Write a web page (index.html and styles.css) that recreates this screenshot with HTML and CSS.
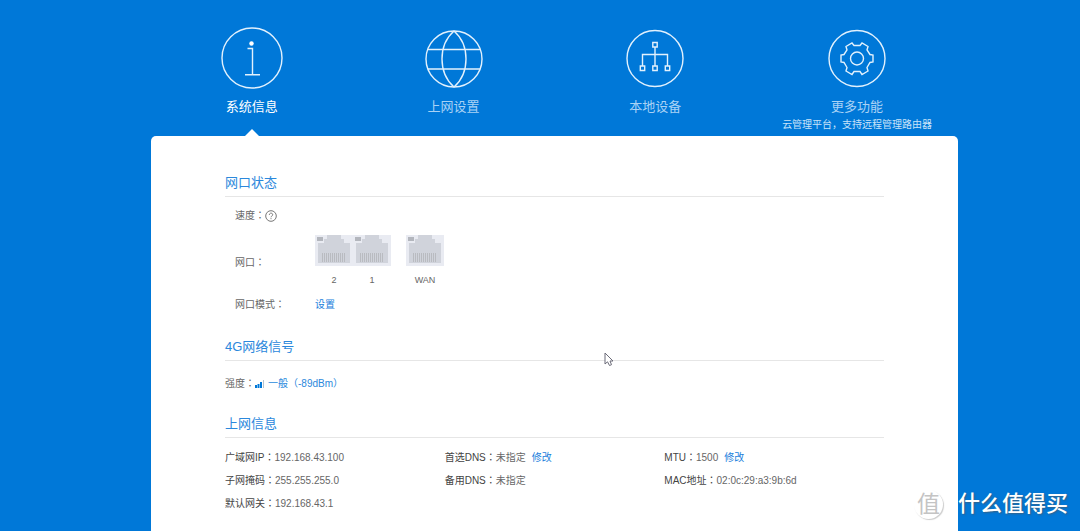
FILE: index.html
```html
<!DOCTYPE html>
<html lang="zh-CN">
<head>
<meta charset="utf-8">
<title>系统信息</title>
<meta name="viewport" content="width=device-width, initial-scale=1">
<link rel="stylesheet" href="styles.css">
</head>
<body>
<svg class="defs" width="0" height="0" aria-hidden="true">
  <symbol id="port" viewBox="0 0 38 31">
    <rect width="38" height="31" fill="#e9ebf2"/>
    <path d="M3 8H9V4H12V0H26V4H29V8H35V28H3Z" fill="#d0d3db"/>
    <rect x="2" y="2" width="6" height="4" fill="#b3b6bd"/>
    <path d="M7.500 18V27M9.500 18V27M11.500 18V27M13.500 18V27M15.500 18V27M17.500 18V27M19.500 18V27M21.500 18V27M23.500 18V27M25.500 18V27M27.500 18V27M29.500 18V27" stroke="#b9bbc0" stroke-width="1"/>
  </symbol>
</svg>
<div class="page">
  <nav class="tabs">
    <a class="tab active" href="#system">
      <svg class="tab-icon" viewBox="0 0 62 62"><circle cx="31" cy="31" r="30"/><path d="M26.500 21.500H31.500V47.500M24 47.700H39"/><circle class="dot" cx="30.500" cy="16.500" r="2.200"/></svg>
      <span class="tab-label">系统信息</span>
    </a>
    <a class="tab" href="#network">
      <svg class="tab-icon" viewBox="0 0 62 62"><circle cx="31" cy="32" r="28"/><path d="M31 4C15 18 15 46 31 60M31 4C47 18 47 46 31 60M5 22.500H57M5 42H57"/></svg>
      <span class="tab-label">上网设置</span>
    </a>
    <a class="tab" href="#devices">
      <svg class="tab-icon" viewBox="0 0 62 62"><circle cx="31" cy="31.500" r="28"/><path d="M28.800 15.500H33.200V20H28.800ZM31 20V39M18.500 39V27.500H43.500V39M16.300 39H20.700V43.500H16.300ZM28.800 39H33.200V43.500H28.800ZM41.300 39H45.700V43.500H41.300Z"/></svg>
      <span class="tab-label">本地设备</span>
    </a>
    <a class="tab" href="#more">
      <svg class="tab-icon" viewBox="0 0 62 62"><circle cx="31" cy="31.500" r="28"/><circle cx="31" cy="31.500" r="6.500"/><path d="M26 16L28 18.500H34L36 16L42 19.500L41 23L44 27.500L47 28V35L44 35.500L41 40.500L42 44L36 47.500L34 44.500H28L26 47.500L20 44L21 40.500L18 35.500L15 35V28L18 27.500L21 23L20 19.500Z"/></svg>
      <span class="tab-label">更多功能</span>
      <span class="tab-note">云管理平台，支持远程管理路由器</span>
    </a>
  </nav>
  <main class="panel">
    <section class="ports-section">
      <h2>网口状态</h2>
      <div class="row">
        <span class="label">速度<span class="colon" lang="zh-TW">：</span></span>
        <button class="help" type="button" aria-label="帮助"><svg viewBox="0 0 12 12"><circle cx="6" cy="6" r="5.300"/><path d="M4.300 4.900C4.300 2.600 7.800 2.600 7.700 4.800C7.700 6 6 6 6 7.300M6 8.200V9.200"/></svg></button>
      </div>
      <div class="row ports-row">
        <span class="label wide">网口<span class="colon" lang="zh-TW">：</span></span>
        <div class="ports">
          <figure><svg><use href="#port"/></svg><figcaption>2</figcaption></figure>
          <figure><svg><use href="#port"/></svg><figcaption>1</figcaption></figure>
          <figure class="wan"><svg><use href="#port"/></svg><figcaption>WAN</figcaption></figure>
        </div>
      </div>
      <div class="row">
        <span class="label wide">网口模式<span class="colon" lang="zh-TW">：</span></span>
        <a href="#mode">设置</a>
      </div>
    </section>
    <section class="signal-section">
      <h2>4G网络信号</h2>
      <div class="signal">
        <span>强度<span class="colon" lang="zh-TW">：</span></span>
        <svg class="bars" viewBox="0 0 9 8"><path d="M0 5H2V8H0ZM2.500 4H4.500V8H2.500ZM5 2H7V8H5Z" fill="#0078d8"/><path d="M8 0H9V8H8Z" fill="#b5c3d0"/></svg>
        <span class="blue">一般<span class="colon" lang="zh-TW">（</span>-89dBm<span class="colon" lang="zh-TW">）</span></span>
      </div>
    </section>
    <section>
      <h2>上网信息</h2>
      <dl class="info">
        <div><dt>广域网IP<span class="colon" lang="zh-TW">：</span></dt><dd>192.168.43.100</dd></div>
        <div><dt>首选DNS<span class="colon" lang="zh-TW">：</span></dt><dd>未指定</dd><dd><a href="#dns">修改</a></dd></div>
        <div><dt>MTU<span class="colon" lang="zh-TW">：</span></dt><dd>1500</dd><dd><a href="#mtu">修改</a></dd></div>
        <div><dt>子网掩码<span class="colon" lang="zh-TW">：</span></dt><dd>255.255.255.0</dd></div>
        <div><dt>备用DNS<span class="colon" lang="zh-TW">：</span></dt><dd>未指定</dd></div>
        <div><dt>MAC地址<span class="colon" lang="zh-TW">：</span></dt><dd>02:0c:29:a3:9b:6d</dd></div>
        <div><dt>默认网关<span class="colon" lang="zh-TW">：</span></dt><dd>192.168.43.1</dd></div>
      </dl>
    </section>
  </main>
</div>
<svg class="cursor" viewBox="0 0 10 15" aria-hidden="true"><path d="M1 1V12L3.500 9.800L5.500 13.500L7.500 12.700L6 9H9Z"/></svg>
<div class="watermark"><span class="seal">值</span><span class="brand">什么值得买</span></div>
</body>
</html>
```

FILE: styles.css
```css
* { box-sizing: border-box; }
body {
  margin: 0;
  background: #0078d8;
  color: #666;
  font: 10px/20px "Liberation Sans", "Noto Sans CJK SC", sans-serif;
}
a { color: #1a80dc; text-decoration: none; }
.defs { position: absolute; }
.page {
  display: flex;
  flex-direction: column;
  height: 100vh;
  overflow: hidden;
  padding: 0 122px 0 151px;
}
.tabs {
  display: grid;
  grid-template-columns: repeat(4, 1fr);
  flex: none;
  height: 136px;
  padding-top: 27px;
}
.tab {
  position: relative;
  display: flex;
  flex-direction: column;
  align-items: center;
  color: #a9d2f5;
}
.tab.active { color: #fff; }
.tab.active::after {
  content: "";
  position: absolute;
  bottom: 0;
  border: 7px solid transparent;
  border-top: 0;
  border-bottom-color: #fff;
}
.tab-icon {
  width: 62px;
  height: 62px;
  margin-bottom: 8px;
  fill: none;
  stroke: #e2f1fd;
  stroke-width: 1.4;
}
.tab-icon .dot { fill: #fff; stroke: none; }
.tab-label { font-size: 13px; }
.tab-note { line-height: 16px; color: #c9e3f9; white-space: nowrap; }
.panel {
  flex: 1;
  padding: 37px 74px 0;
  background: #fff;
  border-radius: 5px 5px 0 0;
}
h2 {
  margin: 0;
  padding-bottom: 3px;
  border-bottom: 1px solid #e6e6e6;
  color: #2b88dc;
  font-size: 13px;
  font-weight: 400;
  line-height: 20px;
}
.colon { font-family: "Noto Sans CJK TC", sans-serif; line-height: 1; }
.ports-section { margin-bottom: 22px; }
.signal-section { margin-bottom: 20px; }
.row { display: flex; align-items: center; padding-left: 10px; }
h2 + .row { padding-top: 9px; }
.wide { width: 80px; }
.help {
  display: flex;
  padding: 0;
  border: 0;
  background: none;
}
.help svg { width: 12px; height: 12px; fill: none; stroke: #777; }
.ports-row { margin: 9px 0 5px; }
.ports { display: flex; }
figure { width: 38px; margin: 0; text-align: center; }
figure svg { display: block; width: 38px; height: 31px; }
figcaption { padding-top: 4px; font-size: 9px; }
.wan { margin-left: 15px; }
.signal { display: flex; align-items: center; padding-top: 13px; }
.bars { width: 9px; height: 8px; margin-right: 4px; }
.blue { color: #2b88dc; }
.info {
  display: grid;
  grid-template-columns: repeat(3, 1fr);
  row-gap: 3px;
  margin: 0;
  padding-top: 10px;
}
.info div { display: flex; align-items: baseline; }
dt { color: #444; }
dd { margin: 0; }
dd + dd { margin-left: 6px; }
.cursor {
  position: absolute;
  left: 604px;
  top: 352px;
  width: 10px;
  height: 15px;
  fill: #fff;
  stroke: #6b6b78;
}
.watermark {
  position: absolute;
  right: 12px;
  bottom: 11px;
  display: flex;
  align-items: center;
  gap: 15px;
  line-height: 32px;
}
.seal {
  width: 29px;
  height: 29px;
  border-radius: 50%;
  box-shadow: 1px 1px 1px #ccc;
  color: #c4c4c4;
  font-size: 23px;
  line-height: 28px;
  text-align: center;
}
.brand { color: #fff; font-size: 22px; font-weight: 500; text-shadow: 1px 1px 2px #555a; }
```
